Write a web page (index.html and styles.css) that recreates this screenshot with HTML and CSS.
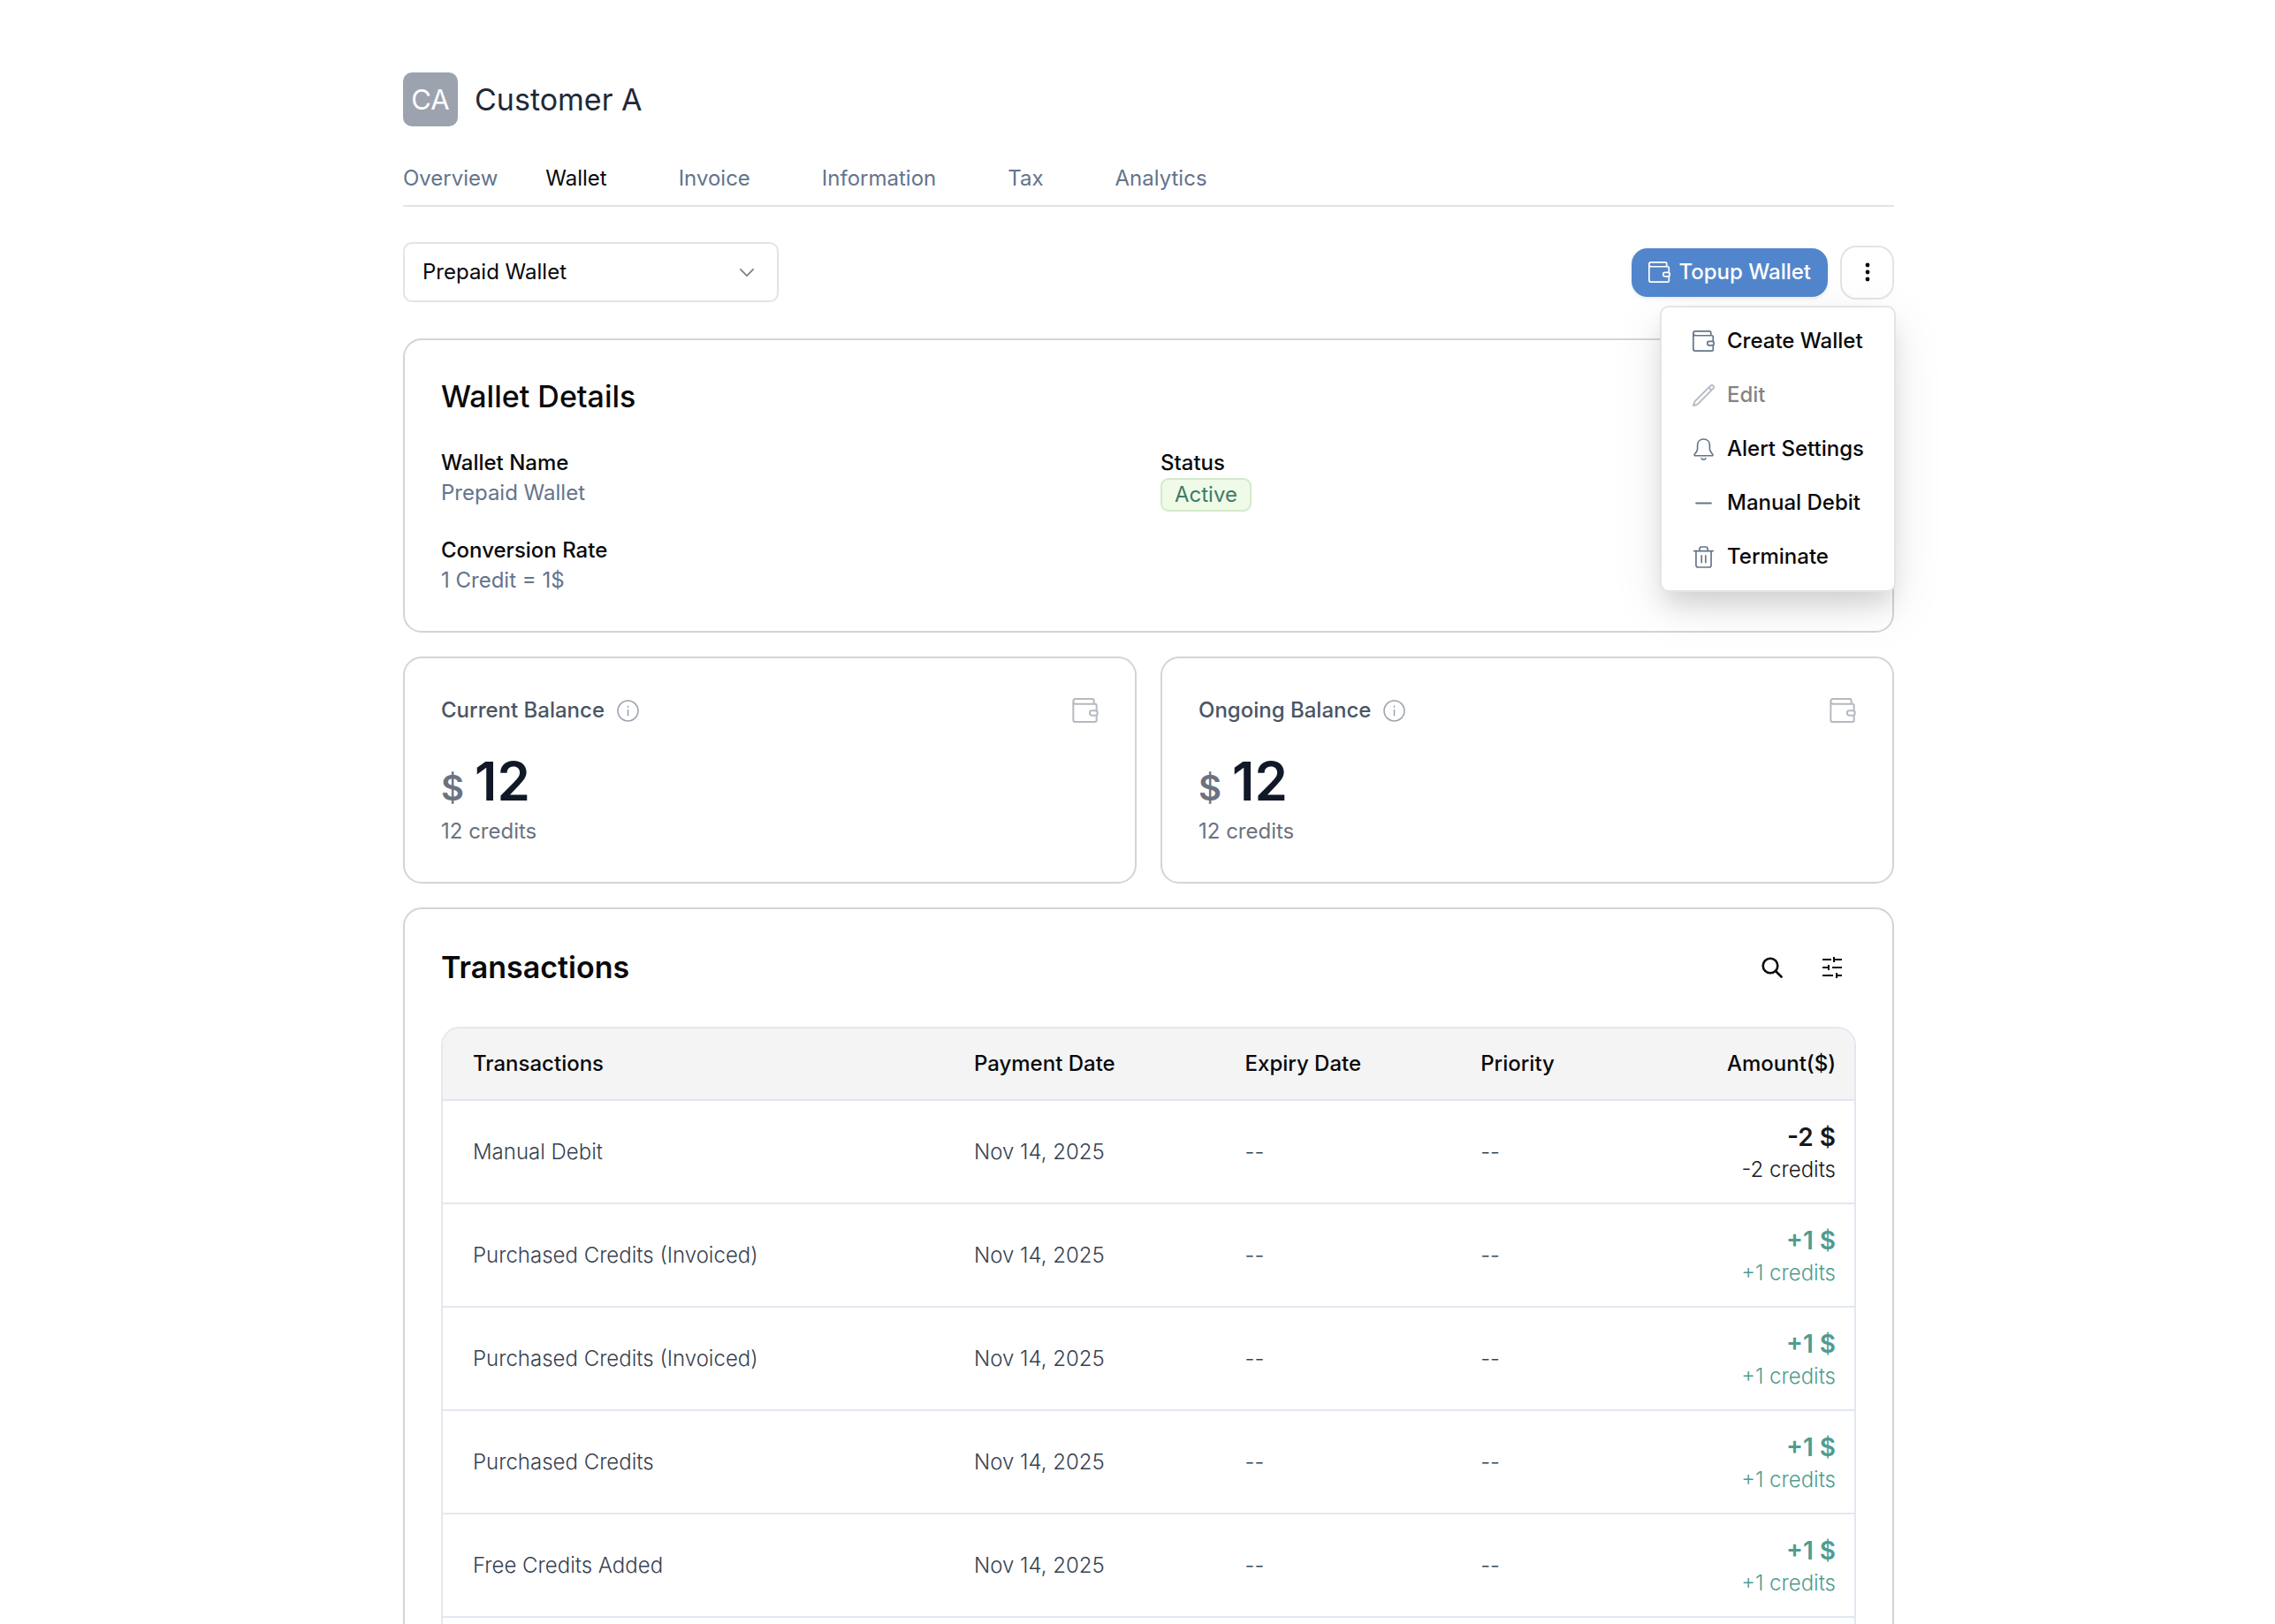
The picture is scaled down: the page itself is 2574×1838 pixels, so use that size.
FILE: index.html
```html
<!DOCTYPE html>
<html lang="en">
<head>
  <meta charset="UTF-8">
  <meta name="viewport" content="width=device-width, initial-scale=1.0">
  <title>Customer A - Wallet</title>
  <link rel="stylesheet" href="styles.css">
</head>
<body>
  <svg class="sprite" aria-hidden="true">
    <symbol id="icon-wallet" viewBox="0 0 88 84">
      <path d="M73 20V8a5 5 0 0 0-5-5H11a8 8 0 0 0-8 8v63a7 7 0 0 0 7 7h67a5 5 0 0 0 5-5V59M3 12a8 8 0 0 0 8 8h66a5 5 0 0 1 5 5v18"/>
      <rect x="59" y="43" width="26" height="16" rx="7"/>
    </symbol>
    <symbol id="icon-info" viewBox="0 0 24 24">
      <circle cx="12" cy="12" r="11"/>
      <path d="M12 11v6M12 7v1"/>
    </symbol>
  </svg>

  <main class="page">
    <header class="customer">
      <span class="avatar">CA</span>
      <h1>Customer A</h1>
    </header>

    <nav class="tabs">
      <a href="#overview">Overview</a>
      <a href="#wallet" class="active">Wallet</a>
      <a href="#invoice">Invoice</a>
      <a href="#information">Information</a>
      <a href="#tax">Tax</a>
      <a href="#analytics">Analytics</a>
    </nav>

    <div class="toolbar">
      <div class="select-box">
        <select aria-label="Wallet">
          <option>Prepaid Wallet</option>
        </select>
        <svg class="chevron" viewBox="0 0 18 10"><path d="M1 1l8 8 8-8"/></svg>
      </div>

      <div class="actions">
        <button class="btn-primary" type="button">
          <svg class="icon wallet"><use href="#icon-wallet"/></svg>
          Topup Wallet
        </button>
        <button class="btn-more" type="button" aria-label="More options">
          <svg viewBox="0 0 6 22"><circle cx="3" cy="3" r="2.4"/><circle cx="3" cy="11" r="2.4"/><circle cx="3" cy="19" r="2.4"/></svg>
        </button>

        <div class="menu">
          <button type="button">
            <svg class="icon wallet"><use href="#icon-wallet"/></svg>
            Create Wallet
          </button>
          <button type="button" disabled>
            <svg class="icon" viewBox="1.5 1.5 21 21" stroke-width="1.5"><path d="M16.862 4.487l1.687-1.688a1.875 1.875 0 1 1 2.652 2.652L6.832 19.82a4.5 4.5 0 0 1-1.897 1.13l-2.685.8.8-2.685a4.5 4.5 0 0 1 1.13-1.897L16.863 4.487zm0 0L19.5 7.125"/></svg>
            Edit
          </button>
          <button type="button">
            <svg class="icon" viewBox="0 0 76 76" stroke-width="5"><path d="M38 3c-13 0-21 9-21 21v12c0 8-4 12-9 18-3 3-2 6 2 6h56c4 0 5-3 2-6-5-6-9-10-9-18V24C59 12 51 3 38 3zM31 69c2 6 12 6 14 0"/></svg>
            Alert Settings
          </button>
          <button type="button">
            <svg class="icon" viewBox="0 0 24 24" stroke-width="2"><path d="M4 12h16"/></svg>
            Manual Debit
          </button>
          <button type="button">
            <svg class="icon" viewBox="0 0 76 76" stroke-width="5"><path d="M5 17h66M24 17v-6c0-5 3-8 7-8h14c4 0 7 3 7 8v6M12 17v49c0 4 3 7 7 7h38c4 0 7-3 7-7V17M31 33v24M45 33v24"/></svg>
            Terminate
          </button>
        </div>
      </div>
    </div>

    <section class="card">
      <h2 class="card-title">Wallet Details</h2>
      <dl class="details">
        <div>
          <dt>Wallet Name</dt>
          <dd>Prepaid Wallet</dd>
        </div>
        <div>
          <dt>Status</dt>
          <dd><span class="badge">Active</span></dd>
        </div>
        <div>
          <dt>Conversion Rate</dt>
          <dd>1 Credit = 1$</dd>
        </div>
      </dl>
    </section>

    <div class="balances">
      <section class="card">
        <div class="balance-head">
          <h3>Current Balance</h3>
          <svg class="info"><use href="#icon-info"/></svg>
          <svg class="balance-icon"><use href="#icon-wallet"/></svg>
        </div>
        <p class="balance"><span class="currency">$</span>12</p>
        <p class="credits">12 credits</p>
      </section>
      <section class="card">
        <div class="balance-head">
          <h3>Ongoing Balance</h3>
          <svg class="info"><use href="#icon-info"/></svg>
          <svg class="balance-icon"><use href="#icon-wallet"/></svg>
        </div>
        <p class="balance"><span class="currency">$</span>12</p>
        <p class="credits">12 credits</p>
      </section>
    </div>

    <section class="card">
      <div class="transactions-head">
        <h2 class="card-title bold">Transactions</h2>
        <button type="button" aria-label="Search">
          <svg class="search" viewBox="0 0 24 24"><circle cx="10" cy="10" r="8.3"/><path d="M16 16l6.500 6.500"/></svg>
        </button>
        <button type="button" aria-label="Filter">
          <svg class="filter" viewBox="0 0 24 24"><path d="M1 3h10M14 0v6M14 3h9M1 12h7M8 9v6M12 12h11M1 21h12M17 18v6M17 21h6"/></svg>
        </button>
      </div>

      <div class="table-box">
        <table>
          <thead>
            <tr>
              <th class="col-name">Transactions</th>
              <th class="col-payment">Payment Date</th>
              <th class="col-expiry">Expiry Date</th>
              <th class="col-priority">Priority</th>
              <th class="amount">Amount($)</th>
            </tr>
          </thead>
          <tbody>
            <tr>
              <td>Manual Debit</td>
              <td>Nov 14, 2025</td>
              <td>--</td>
              <td>--</td>
              <td class="amount"><strong>-2 $</strong><span>-2 credits</span></td>
            </tr>
            <tr>
              <td>Purchased Credits (Invoiced)</td>
              <td>Nov 14, 2025</td>
              <td>--</td>
              <td>--</td>
              <td class="amount plus"><strong>+1 $</strong><span>+1 credits</span></td>
            </tr>
            <tr>
              <td>Purchased Credits (Invoiced)</td>
              <td>Nov 14, 2025</td>
              <td>--</td>
              <td>--</td>
              <td class="amount plus"><strong>+1 $</strong><span>+1 credits</span></td>
            </tr>
            <tr>
              <td>Purchased Credits</td>
              <td>Nov 14, 2025</td>
              <td>--</td>
              <td>--</td>
              <td class="amount plus"><strong>+1 $</strong><span>+1 credits</span></td>
            </tr>
            <tr>
              <td>Free Credits Added</td>
              <td>Nov 14, 2025</td>
              <td>--</td>
              <td>--</td>
              <td class="amount plus"><strong>+1 $</strong><span>+1 credits</span></td>
            </tr>
            <tr>
              <td></td>
              <td></td>
              <td></td>
              <td></td>
              <td></td>
            </tr>
          </tbody>
        </table>
      </div>
    </section>
  </main>
</body>
</html>
```
FILE: styles.css
```css
* {
  box-sizing: border-box;
}
body {
  font-family: Inter, sans-serif;
  font-size: 24px;
  line-height: 34px;
  margin: 0;
  background-color: #fff;
  color: #09090b;
}
h1, h2, h3, p, dl, dd {
  margin: 0;
}
button, select {
  font: inherit;
  color: inherit;
  cursor: pointer;
}
svg {
  display: block;
  flex: none;
  fill: none;
  stroke: currentColor;
  stroke-linecap: round;
  stroke-linejoin: round;
}
.sprite {
  display: none;
}
.page {
  height: 100vh;
  overflow: hidden;
  padding: 82px 431px 0 456px;
}

/* customer name */
.customer {
  display: flex;
  align-items: center;
  gap: 19px;
}
.customer h1 {
  font-size: 34px;
  line-height: 44px;
  font-weight: 400;
  color: #1f2937;
}
.avatar {
  display: flex;
  align-items: center;
  justify-content: center;
  width: 62px;
  height: 61px;
  border-radius: 10px;
  background-color: #9ca3af;
  color: #fff;
  font-size: 31px;
}

/* tabs */
.tabs {
  display: flex;
  gap: 27px;
  margin-top: 42px;
  padding-bottom: 13px;
  border-bottom: 2px solid #e4e4e7;
}
.tabs a {
  padding: 0 27px;
  color: #64748b;
  text-decoration: none;
}
.tabs a:first-child {
  padding: 0;
}
.tabs a.active {
  color: #09090b;
}

/* wallet select and actions */
.toolbar {
  display: flex;
  align-items: center;
  justify-content: space-between;
  margin: 40px 0 41px;
}
.select-box {
  display: grid;
  align-items: center;
  width: 425px;
}
.select-box select {
  grid-area: 1 / 1;
  height: 68px;
  padding: 0 20px;
  border: 2px solid #e4e4e7;
  border-radius: 10px;
  background-color: #fff;
  appearance: none;
}
.chevron {
  grid-area: 1 / 1;
  justify-self: end;
  width: 16px;
  height: 9px;
  margin-right: 28px;
  color: #808080;
  stroke-width: 2;
  pointer-events: none;
}
.actions {
  position: relative;
  display: flex;
  align-items: center;
  gap: 14px;
}
.icon {
  width: 25px;
  height: 25px;
}
.wallet {
  height: 24px;
  stroke-width: 6;
}
.btn-primary {
  display: flex;
  align-items: center;
  gap: 9px;
  height: 55px;
  padding: 0 19px;
  border: none;
  border-radius: 18px;
  background-color: #5286cc;
  color: #fff;
  font-weight: 500;
  box-shadow: 0 2px 4px rgba(0, 0, 0, 0.08);
}
.btn-more {
  display: flex;
  align-items: center;
  justify-content: center;
  width: 61px;
  height: 61px;
  padding: 0;
  border: 2px solid #e4e4e7;
  border-radius: 18px;
  background-color: #fff;
}
.btn-more svg {
  width: 6px;
  height: 22px;
  fill: currentColor;
  stroke: none;
}
.menu {
  position: absolute;
  top: 100%;
  right: -2px;
  z-index: 1;
  width: 267px;
  margin-top: 7px;
  padding: 8px 7px 7px;
  border: 2px solid #e4e4e7;
  border-radius: 10px;
  background-color: #fff;
  box-shadow: 0 18px 27px -5px rgba(0, 0, 0, 0.12), 0 18px 60px rgba(0, 0, 0, 0.09);
}
.menu button {
  display: flex;
  align-items: center;
  gap: 14px;
  width: 100%;
  height: 61px;
  padding: 0 28px;
  border: none;
  background: none;
  font-weight: 500;
  white-space: nowrap;
}
.menu button:disabled {
  opacity: 0.5;
  cursor: default;
}
.menu .icon {
  color: #64748b;
}

/* cards */
.card {
  padding: 42px 41px 40px;
  border: 2px solid #d1d5db;
  border-radius: 21px;
}
.card-title {
  font-size: 34px;
  line-height: 44px;
  font-weight: 500;
}
.card-title.bold {
  font-weight: 600;
}
.details {
  display: grid;
  grid-template-columns: 1fr 1fr;
  gap: 27px;
  margin-top: 36px;
}
.details dt {
  font-weight: 500;
}
.details dd {
  color: #64748b;
}
.badge {
  display: block;
  width: fit-content;
  padding: 0 14px;
  border: 2px solid #d5eacb;
  border-radius: 9px;
  background-color: #effbe6;
  color: #3f7a68;
}

/* balances */
.balances {
  display: grid;
  grid-template-columns: 1fr 1fr;
  gap: 27px;
  margin: 27px 0;
}
.balance-head {
  display: flex;
  align-items: center;
  gap: 14px;
}
.balance-head h3 {
  font-size: 24px;
  font-weight: 500;
  color: #4b5563;
}
.info {
  width: 25px;
  height: 25px;
  color: #9ca3af;
  stroke-width: 1.5;
}
.balance-icon {
  width: 30px;
  height: 28px;
  margin-left: auto;
  color: #b5b9c1;
  stroke-width: 6;
}
.balance {
  margin: 31px 0 8px;
  font-size: 60px;
  line-height: 64px;
  font-weight: 600;
  color: #111827;
}
.currency {
  margin-right: 12px;
  font-size: 40px;
  line-height: 42px;
  color: #6b7280;
}
.credits {
  color: #6b7280;
}

/* transactions */
.transactions-head {
  display: flex;
  align-items: center;
  gap: 14px;
  margin-bottom: 44px;
}
.transactions-head h2 {
  margin-right: auto;
}
.transactions-head button {
  display: flex;
  align-items: center;
  justify-content: center;
  width: 54px;
  height: 47px;
  padding: 0;
  border: none;
  background: none;
}
.transactions-head svg {
  width: 24px;
  height: 24px;
  stroke-width: 2;
}
.transactions-head .search {
  stroke-width: 2.6;
}
.transactions-head .filter {
  stroke-linecap: butt;
}
.table-box {
  overflow: hidden;
  border: 2px solid #e2e8f0;
  border-radius: 21px;
}
table {
  width: 100%;
  table-layout: fixed;
  border-collapse: separate;
  border-spacing: 0;
}
th, td {
  padding: 0 21px 0 34px;
  text-align: left;
}
th {
  height: 82px;
  border-bottom: 2px solid #e2e8f0;
  background-color: #f4f4f4;
  font-weight: 500;
}
td {
  height: 117px;
  border-bottom: 2px solid #e2e8f0;
  color: #374151;
  font-weight: 300;
}
.col-name {
  width: 35.5%;
}
.col-payment {
  width: 19.2%;
}
.col-expiry {
  width: 16.7%;
}
.col-priority {
  width: 14%;
}
th.amount, td.amount {
  text-align: right;
}
td.amount {
  color: #18181b;
}
td.plus {
  color: #4f9c8f;
}
.amount strong {
  display: block;
  font-size: 28px;
  line-height: 40px;
  font-weight: 600;
}
.amount span {
  display: block;
}
```
